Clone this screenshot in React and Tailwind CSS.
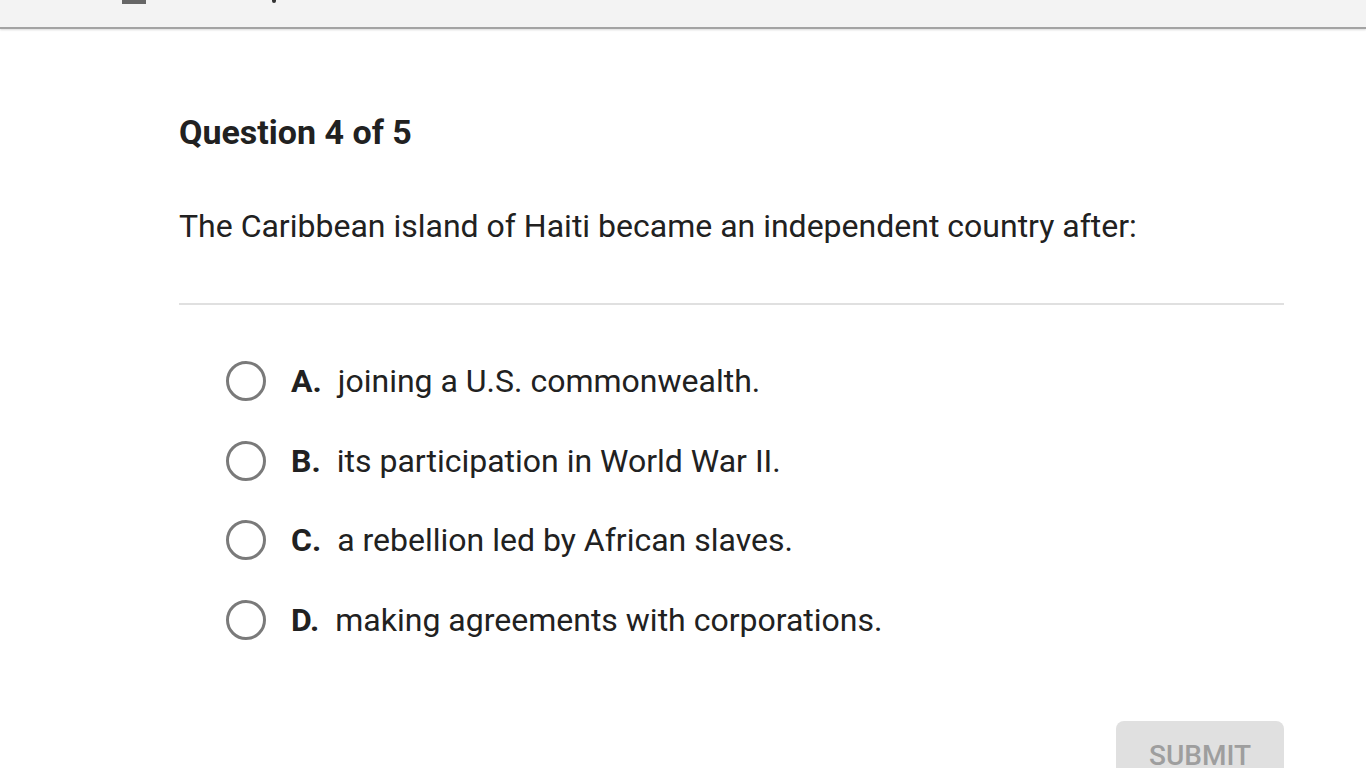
import React, { useState } from "react";

const OPTIONS = [
  { letter: "A.", text: "joining a U.S. commonwealth." },
  { letter: "B.", text: "its participation in World War II." },
  { letter: "C.", text: "a rebellion led by African slaves." },
  { letter: "D.", text: "making agreements with corporations." },
];

export default function App() {
  const [selected, setSelected] = useState("");

  return (
    <div className="min-h-screen bg-white font-['Roboto',sans-serif] text-[#212121] overflow-hidden h-[768px]">
      {/* top bar, scrolled mostly off screen */}
      <div className="h-[29px] bg-[#f3f3f3] border-b-2 border-[#a3a3a3] shadow-[0_1px_2px_rgba(0,0,0,0.15)] flex items-start">
        <div className="ml-[122px] w-[24px] h-[4px] bg-[#666666]" />
        <div className="ml-[126px] w-[4px] h-[3px] bg-[#333333] rounded-b-full" />
      </div>

      <div className="pl-[179px] pr-[82px]">
        <h1 className="mt-[81px] text-[34px] font-bold leading-[44px]">
          Question 4 of 5
        </h1>
        <p className="mt-[52px] text-[32px] leading-[40px]">
          The Caribbean island of Haiti became an independent country after:
        </p>
        <div className="mt-[57px] h-[2px] bg-[#e0e0e0]" />

        <div className="mt-[56px] pl-[47px] flex flex-col gap-[39.5px]">
          {OPTIONS.map((o) => (
            <label
              key={o.letter}
              className="flex items-center cursor-pointer h-[40px]"
              onClick={() => setSelected(o.letter)}
            >
              <span className="w-[40px] h-[40px] rounded-full border-[3px] border-[#7a7a7a] flex items-center justify-center shrink-0">
                {selected === o.letter && (
                  <span className="w-[20px] h-[20px] rounded-full bg-[#7a7a7a]" />
                )}
              </span>
              <span className="ml-[25px] text-[32px] font-bold leading-[40px]">
                {o.letter}
              </span>
              <span className="ml-[16px] text-[32px] leading-[40px]">
                {o.text}
              </span>
            </label>
          ))}
        </div>

        <div className="flex justify-end mt-[81px]">
          <button className="w-[168px] h-[64px] rounded-[8px] bg-[#e0e0e0] text-[#9e9e9e] text-[28px] font-medium leading-[32px] pt-[19px] flex justify-center items-start">
            SUBMIT
          </button>
        </div>
      </div>
    </div>
  );
}
